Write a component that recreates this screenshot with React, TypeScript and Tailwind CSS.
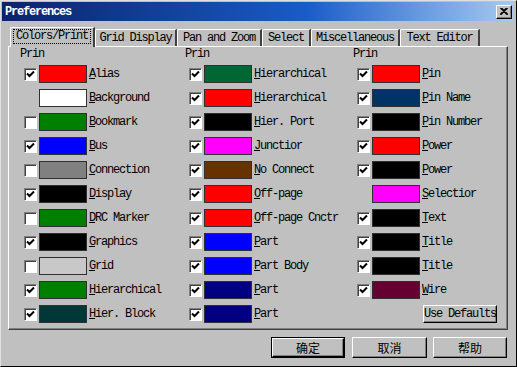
import React from "react";

type Item = { label: string; color: string; check: boolean | null };

const col1: Item[] = [
  { label: "Alias", color: "bg-[#ff0000]", check: true },
  { label: "Background", color: "bg-white", check: null },
  { label: "Bookmark", color: "bg-[#008000]", check: false },
  { label: "Bus", color: "bg-[#0000ff]", check: true },
  { label: "Connection", color: "bg-[#808080]", check: false },
  { label: "Display", color: "bg-black", check: true },
  { label: "DRC Marker", color: "bg-[#008000]", check: false },
  { label: "Graphics", color: "bg-black", check: true },
  { label: "Grid", color: "bg-[#c8c8c8]", check: false },
  { label: "Hierarchical", color: "bg-[#008000]", check: true },
  { label: "Hier. Block", color: "bg-[#003838]", check: true },
];

const col2: Item[] = [
  { label: "Hierarchical", color: "bg-[#006633]", check: true },
  { label: "Hierarchical", color: "bg-[#ff0000]", check: true },
  { label: "Hier. Port", color: "bg-black", check: true },
  { label: "Junctior", color: "bg-[#ff00ff]", check: true },
  { label: "No Connect", color: "bg-[#663300]", check: true },
  { label: "Off-page", color: "bg-[#ff0000]", check: true },
  { label: "Off-page Cnctr", color: "bg-[#ff0000]", check: true },
  { label: "Part", color: "bg-[#0000ff]", check: true },
  { label: "Part Body", color: "bg-[#0000ff]", check: true },
  { label: "Part", color: "bg-[#000080]", check: true },
  { label: "Part", color: "bg-[#000080]", check: true },
];

const col3: Item[] = [
  { label: "Pin", color: "bg-[#ff0000]", check: true },
  { label: "Pin Name", color: "bg-[#003366]", check: true },
  { label: "Pin Number", color: "bg-black", check: true },
  { label: "Power", color: "bg-[#ff0000]", check: true },
  { label: "Power", color: "bg-black", check: true },
  { label: "Selectior", color: "bg-[#ff00ff]", check: null },
  { label: "Text", color: "bg-black", check: true },
  { label: "Title", color: "bg-black", check: true },
  { label: "Title", color: "bg-black", check: true },
  { label: "Wire", color: "bg-[#660033]", check: true },
];

const tabs = [
  { name: "Colors/Print", w: "w-[85px]", active: true },
  { name: "Grid Display", w: "w-[82px]", active: false },
  { name: "Pan and Zoom", w: "w-[85px]", active: false },
  { name: "Select", w: "w-[49px]", active: false },
  { name: "Miscellaneous", w: "w-[89px]", active: false },
  { name: "Text Editor", w: "w-[80px]", active: false },
];

function Check({ on }: { on: boolean }) {
  return (
    <div className="w-[13px] h-[13px] bg-white border border-t-[#808080] border-l-[#808080] border-r-white border-b-white shadow-[inset_1px_1px_0_#404040] flex items-center justify-center">
      {on && (
        <svg width="9" height="9" viewBox="0 0 9 9">
          <path d="M1 3.5 L3.5 6 L8 1.5" stroke="#000" strokeWidth="2" fill="none" />
        </svg>
      )}
    </div>
  );
}

function Row({ item }: { item: Item }) {
  return (
    <div className="flex items-center h-[24px] pl-[4px]">
      {item.check === null ? <div className="w-[13px]" /> : <Check on={item.check} />}
      <div className={`ml-[2px] w-[48px] h-[18px] border border-[#303030] ${item.color}`} />
      <span className="ml-[2px] whitespace-nowrap">
        <span className="underline underline-offset-1">{item.label[0]}</span>
        {item.label.slice(1)}
      </span>
    </div>
  );
}

function Column({ items, children }: { items: Item[]; children?: React.ReactNode }) {
  return (
    <div className="flex flex-col">
      <div className="leading-[12px] h-[12px]">Prin</div>
      <div className="mt-[2px] flex flex-col">
        {items.map((it, i) => (
          <Row key={i} item={it} />
        ))}
        {children}
      </div>
    </div>
  );
}

function Button({ label, def, className }: { label: string; def?: boolean; className: string }) {
  return (
    <div className={`h-[21px] ${def ? "border border-black" : ""} ${className}`}>
      <div className="h-full w-full bg-[#c0c0c0] border border-t-white border-l-white border-r-black border-b-black shadow-[inset_-1px_-1px_0_#808080] flex items-center justify-center font-['Noto_Sans_CJK_SC',sans-serif] text-[12px] tracking-normal">
        {label}
      </div>
    </div>
  );
}

export default function App() {
  return (
    <div className="w-[517px] h-[367px] bg-[#c0c0c0] border border-t-[#dfdfdf] border-l-[#dfdfdf] border-r-black border-b-black pl-[1px] pt-[1px] pr-[3px] flex flex-col font-['Liberation_Mono',monospace] text-[12px] tracking-[-1.2px] text-black leading-[12px]">
      <div className="h-[19px] shrink-0 flex items-center bg-gradient-to-r from-[#0a246a] via-[#1a5cc8] via-60% to-[#a6caf0] pl-[3px] pr-[1px]">
        <span className="text-white font-bold">Preferences</span>
        <div className="ml-auto w-[16px] h-[14px] bg-[#c0c0c0] border border-t-white border-l-white border-r-black border-b-black shadow-[inset_-1px_-1px_0_#808080] flex items-center justify-center">
          <svg width="8" height="7" viewBox="0 0 8 7">
            <path d="M0.5 0 L7.5 7 M7.5 0 L0.5 7 M1.5 0 L8 6.5 M6.5 0 L0 6.5" stroke="#000" strokeWidth="1.2" fill="none" />
          </svg>
        </div>
      </div>

      <div className="mt-[6px] h-[20px] flex items-end pl-[8px]">
        {tabs.map((t) =>
          t.active ? (
            <div
              key={t.name}
              className={`${t.w} h-[20px] relative z-10 bg-[#c0c0c0] border-t border-l border-white border-r-2 border-r-[#404040] rounded-tl-[2px] flex items-start justify-center pt-[2px]`}
            >
              <span className="outline outline-1 outline-dotted outline-black px-[2px] leading-[13px]">{t.name}</span>
            </div>
          ) : (
            <div
              key={t.name}
              className={`${t.w} h-[17px] mb-[1px] bg-[#c0c0c0] border-t border-l border-white border-r-2 border-r-[#404040] rounded-tl-[2px] flex items-center justify-center`}
            >
              {t.name}
            </div>
          )
        )}
      </div>

      <div className="-mt-[1px] ml-[6px] w-[500px] h-[284px] border border-t-white border-l-white border-r-[#404040] border-b-[#404040] shadow-[inset_-1px_-1px_0_#808080] pl-[11px] pt-[1px] grid grid-cols-[165px_168px_1fr]">
        <Column items={col1} />
        <Column items={col2} />
        <Column items={col3}>
          <div className="h-[24px] flex items-center pl-[70px]">
            <div className="w-[74px] h-[18px] bg-[#c0c0c0] border border-t-white border-l-white border-r-black border-b-black shadow-[inset_-1px_-1px_0_#808080] flex items-center justify-center whitespace-nowrap">
              Use Defaults
            </div>
          </div>
        </Column>
      </div>

      <div className="mt-[7px] flex justify-end pr-[6px]">
        <Button label="确定" def className="w-[74px]" />
        <Button label="取消" className="ml-[7px] w-[75px]" />
        <Button label="帮助" className="ml-[6px] w-[74px]" />
      </div>
    </div>
  );
}
